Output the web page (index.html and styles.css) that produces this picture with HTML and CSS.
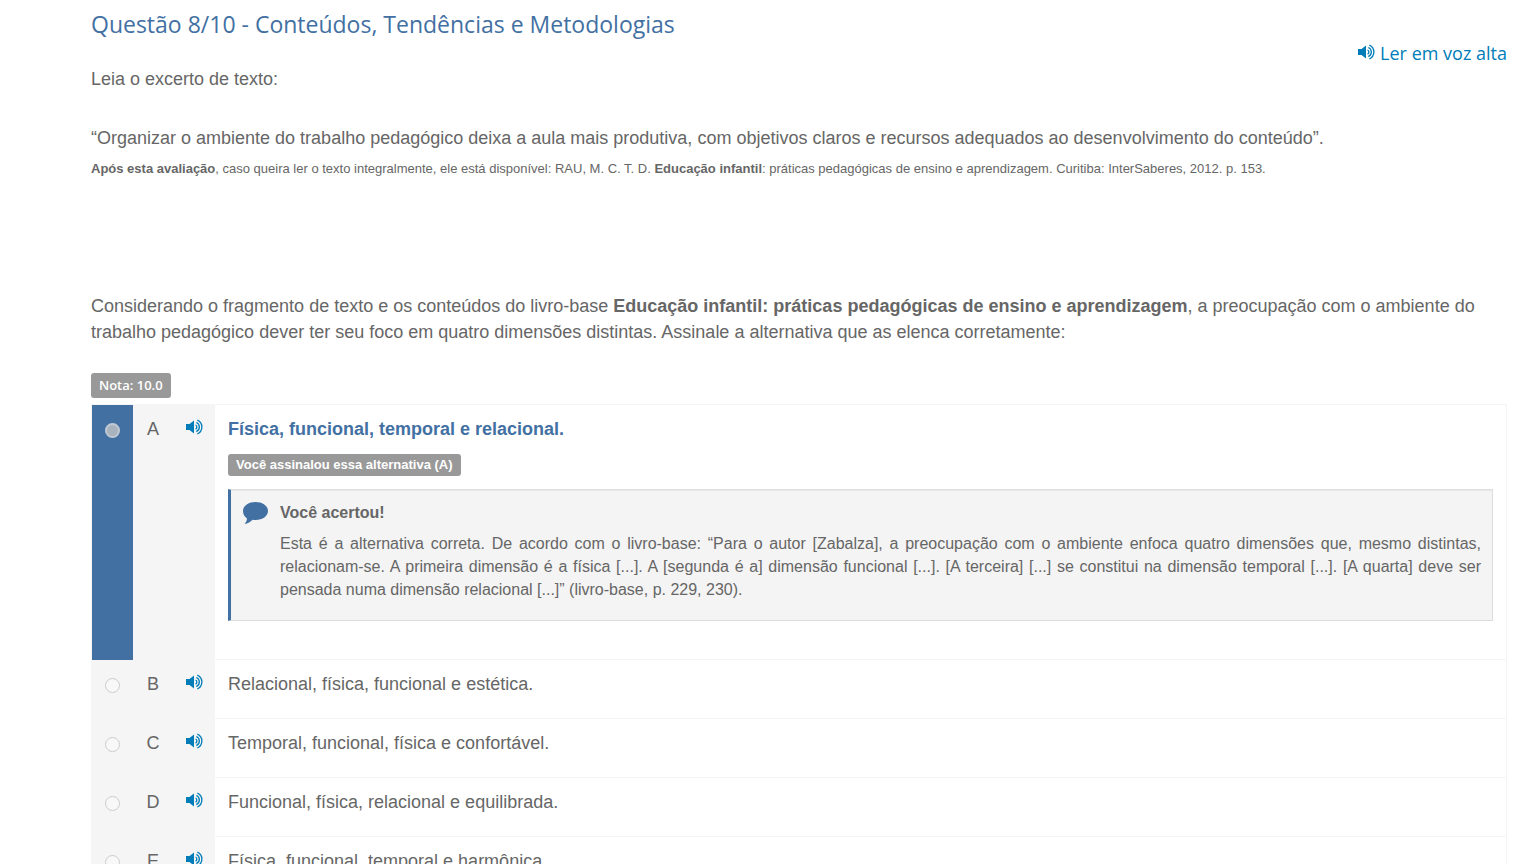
FILE: index.html
```html
<!DOCTYPE html>
<html lang="pt-BR">
<head>
    <meta charset="UTF-8">
    <meta name="viewport" content="width=device-width, initial-scale=1.0">
    <title>Questão 8/10</title>
    <link rel="stylesheet" href="styles.css">
</head>
<body>
    <svg class="sprite" aria-hidden="true">
        <symbol id="icon-sound" viewBox="0 0 18 16">
            <path d="M1 5h3.500L9 1.500v13L4.500 11H1z" fill="currentColor"/>
            <g fill="none" stroke="currentColor" stroke-width="1.300">
                <path d="M10.500 6a2.300 2.300 0 0 1 0 4.200"/>
                <path d="M11.300 3.500a5 5 0 0 1 0 9.200"/>
                <path d="M12.300 1.200a7.500 7.500 0 0 1 0 13.800"/>
            </g>
        </symbol>
    </svg>

    <main class="question">
        <h1 class="question-title">Questão 8/10 - Conteúdos, Tendências e Metodologias</h1>
        <div class="read-aloud">
            <a href="#"><svg class="icon-sound"><use href="#icon-sound"/></svg> Ler em voz alta</a>
        </div>

        <div class="statement">
            <p class="intro">Leia o excerto de texto:</p>
            <p class="quote">“Organizar o ambiente do trabalho pedagógico deixa a aula mais produtiva, com objetivos claros e recursos adequados ao desenvolvimento do conteúdo”.</p>
            <p class="source"><strong>Após esta avaliação</strong>, caso queira ler o texto integralmente, ele está disponível: RAU, M. C. T. D. <strong>Educação infantil</strong>: práticas pedagógicas de ensino e aprendizagem. Curitiba: InterSaberes, 2012. p. 153.</p>
            <p class="prompt">Considerando o fragmento de texto e os conteúdos do livro-base <strong>Educação infantil: práticas pedagógicas de ensino e aprendizagem</strong>, a preocupação com o ambiente do trabalho pedagógico dever ter seu foco em quatro dimensões distintas. Assinale a alternativa que as elenca corretamente:</p>
        </div>

        <span class="label label-grade">Nota: 10.0</span>

        <table class="options">
            <tbody>
                <tr class="correct">
                    <td class="option-radio"><input type="radio" name="answer" id="option-a" checked disabled></td>
                    <td class="option-letter">A</td>
                    <td class="option-sound"><a href="#" aria-label="Ler alternativa A"><svg class="icon-sound"><use href="#icon-sound"/></svg></a></td>
                    <td class="option-text">
                        <label for="option-a">Física, funcional, temporal e relacional.</label>
                        <div class="choice"><span class="label label-choice">Você assinalou essa alternativa (A)</span></div>
                        <div class="feedback">
                            <svg class="icon-comment" viewBox="0 0 26 22" aria-hidden="true">
                                <path d="M13.500 0C20.500 0 26 4 26 9s-5.500 9-12.500 9c-1 0-2-.1-3-.3C8.500 19.800 6 21.500 2.500 22c1.600-1.500 2.300-3.300 2.500-5.500C2.500 14.800 1 12 1 9c0-5 5.500-9 12.500-9z"/>
                            </svg>
                            <div class="feedback-body">
                                <strong>Você acertou!</strong>
                                <p>Esta é a alternativa correta. De acordo com o livro-base: “Para o autor [Zabalza], a preocupação com o ambiente enfoca quatro dimensões que, mesmo distintas, relacionam-se. A primeira dimensão é a física [...]. A [segunda é a] dimensão funcional [...]. [A terceira] [...] se constitui na dimensão temporal [...]. [A quarta] deve ser pensada numa dimensão relacional [...]” (livro-base, p. 229, 230).</p>
                            </div>
                        </div>
                    </td>
                </tr>
                <tr>
                    <td class="option-radio"><input type="radio" name="answer" id="option-b" disabled></td>
                    <td class="option-letter">B</td>
                    <td class="option-sound"><a href="#" aria-label="Ler alternativa B"><svg class="icon-sound"><use href="#icon-sound"/></svg></a></td>
                    <td class="option-text"><label for="option-b">Relacional, física, funcional e estética.</label></td>
                </tr>
                <tr>
                    <td class="option-radio"><input type="radio" name="answer" id="option-c" disabled></td>
                    <td class="option-letter">C</td>
                    <td class="option-sound"><a href="#" aria-label="Ler alternativa C"><svg class="icon-sound"><use href="#icon-sound"/></svg></a></td>
                    <td class="option-text"><label for="option-c">Temporal, funcional, física e confortável.</label></td>
                </tr>
                <tr>
                    <td class="option-radio"><input type="radio" name="answer" id="option-d" disabled></td>
                    <td class="option-letter">D</td>
                    <td class="option-sound"><a href="#" aria-label="Ler alternativa D"><svg class="icon-sound"><use href="#icon-sound"/></svg></a></td>
                    <td class="option-text"><label for="option-d">Funcional, física, relacional e equilibrada.</label></td>
                </tr>
                <tr>
                    <td class="option-radio"><input type="radio" name="answer" id="option-e" disabled></td>
                    <td class="option-letter">E</td>
                    <td class="option-sound"><a href="#" aria-label="Ler alternativa E"><svg class="icon-sound"><use href="#icon-sound"/></svg></a></td>
                    <td class="option-text"><label for="option-e">Física, funcional, temporal e harmônica.</label></td>
                </tr>
            </tbody>
        </table>
    </main>
</body>
</html>
```

FILE: styles.css
```css
* {
    box-sizing: border-box;
}

html {
    scrollbar-width: none;
}

body {
    margin: 0;
    background-color: #fff;
    color: #666;
    font-family: Arial, "Liberation Sans", sans-serif;
    font-size: 18px;
    line-height: 26px;
}

p {
    margin: 0;
}

a {
    color: #007db8;
    text-decoration: none;
}

.sprite {
    display: none;
}

.icon-sound {
    width: 18px;
    height: 16px;
}

.question {
    padding: 8px 29px 24px 91px;
}

.question-title {
    margin: 0;
    color: #4270a2;
    font-family: "Open Sans", sans-serif;
    font-size: 23px;
    font-weight: 400;
    line-height: 32px;
}

.read-aloud {
    font-family: "Open Sans", sans-serif;
    text-align: right;
}

/* Question text */
.intro {
    margin-bottom: 33px;
}

.quote {
    margin-bottom: 5px;
}

.source {
    margin-bottom: 111px;
    font-size: 13px;
}

.prompt {
    margin-bottom: 28px;
}

/* Grey labels */
.label {
    display: inline-block;
    padding: 0 8px;
    border-radius: 3px;
    background-color: #999;
    color: #fff;
}

.label-grade {
    display: block;
    width: fit-content;
    margin-bottom: 6px;
    font-family: "Open Sans", sans-serif;
    font-size: 13px;
    font-weight: 600;
    line-height: 25px;
}

.label-choice {
    font-size: 13px;
    font-weight: bold;
    line-height: 22px;
}

/* Options table */
.options {
    width: 100%;
    border: 1px solid #f5f5f5;
    border-spacing: 0;
}

.options td {
    height: 59px;
    padding: 11px 0;
    background-color: #f5f5f5;
    vertical-align: top;
}

.options .option-radio {
    width: 41px;
    text-align: center;
}

.option-radio input {
    width: 15px;
    height: 15px;
    margin: 7px 0 0;
    display: inline-block;
    vertical-align: top;
    appearance: none;
    border: 1px solid #ccc;
    border-radius: 50%;
    background-color: #f8f8f8;
}

.option-radio input:checked {
    border: 2px solid #c0c9d3;
    background-color: #a9b3be;
}

.options .correct .option-radio {
    background-color: #4270a2;
}

.options .option-letter {
    width: 40px;
    text-align: center;
}

.options .option-sound {
    width: 42px;
    padding-left: 12px;
}

.options .option-text {
    padding: 11px 13px;
    border-bottom: 1px solid #f5f5f5;
    background-color: #fff;
}

.options .correct .option-text {
    padding-bottom: 38px;
}

.correct label {
    color: #4270a2;
    font-weight: bold;
}

.choice {
    margin-top: 8px;
}

/* Answer feedback */
.feedback {
    display: flex;
    gap: 12px;
    margin-top: 13px;
    padding: 11px;
    border: 1px solid #ddd;
    border-left: 3px solid #4270a2;
    background-color: #f4f4f4;
    box-shadow: inset 0 1px 1px rgba(0, 0, 0, 0.05);
    font-size: 16px;
    line-height: 23px;
}

.icon-comment {
    flex: none;
    width: 26px;
    height: 22px;
    margin-top: 1px;
    fill: #4270a2;
}

.feedback-body {
    flex: 1;
}

.feedback-body p {
    margin: 8px 0;
    text-align: justify;
}
```
